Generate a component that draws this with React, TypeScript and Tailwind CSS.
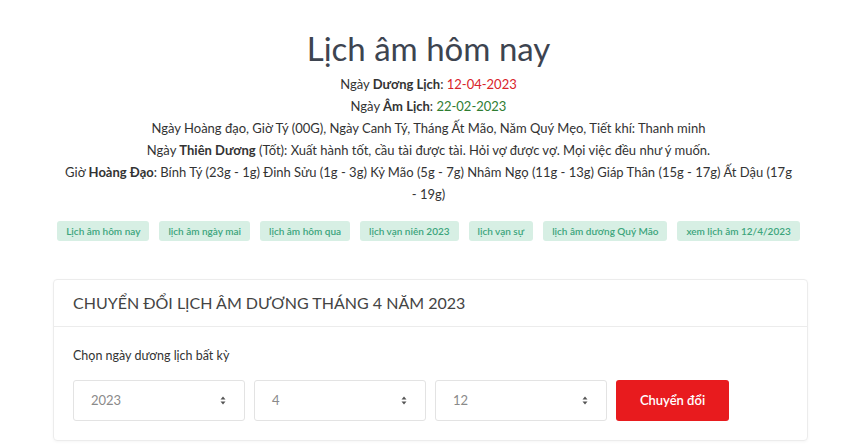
const FONT = { fontFamily: "Lato, 'Noto Sans', sans-serif" };

const TAGS = [
  "Lịch âm hôm nay",
  "lịch âm ngày mai",
  "lịch âm hôm qua",
  "lịch vạn niên 2023",
  "lịch vạn sự",
  "lịch âm dương Quý Mão",
  "xem lịch âm 12/4/2023",
];

function SelectBox({ value }: { value: string }) {
  return (
    <div className="w-[172px] h-[41px] border border-[#e3e3e3] rounded-[3px] flex items-center justify-between pl-[17px] pr-[18px] text-[13px] text-[#8a8a8a] bg-white">
      <span>{value}</span>
      <svg width="6" height="9" viewBox="0 0 6 9">
        <path d="M3 0.5 L5.5 3.5 H0.5 Z" fill="#555" />
        <path d="M3 8.5 L5.5 5.5 H0.5 Z" fill="#555" />
      </svg>
    </div>
  );
}

export default function App() {
  return (
    <div className="min-h-screen bg-white text-[#333]" style={FONT}>
      <div className="w-[755px] mx-auto pt-[26px]">
        <h1 className="text-center text-[33px] leading-[44px] text-[#3d4450]">Lịch âm hôm nay</h1>
        <div className="text-center text-[13px] leading-[22px] mt-[3px]">
          <p>
            Ngày <b>Dương Lịch</b>: <span className="text-[#d9232a]">12-04-2023</span>
          </p>
          <p>
            Ngày <b>Âm Lịch</b>: <span className="text-[#2f7d32]">22-02-2023</span>
          </p>
          <p>Ngày Hoàng đạo, Giờ Tý (00G), Ngày Canh Tý, Tháng Ất Mão, Năm Quý Mẹo, Tiết khí: Thanh minh</p>
          <p>
            Ngày <b>Thiên Dương</b> (Tốt): Xuất hành tốt, cầu tài được tài. Hỏi vợ được vợ. Mọi việc đều như ý muốn.
          </p>
          <p>
            Giờ <b>Hoàng Đạo</b>: Bính Tý (23g - 1g) Đinh Sửu (1g - 3g) Kỷ Mão (5g - 7g) Nhâm Ngọ (11g - 13g) Giáp Thân (15g - 17g) Ất Dậu (17g{" "}
            <span className="whitespace-nowrap">- 19g)</span>
          </p>
        </div>
      </div>
      <div className="flex justify-center gap-[10px] mt-[16px]">
        {TAGS.map((t) => (
          <span
            key={t}
            className="h-[20px] px-[9px] flex items-center rounded-[3px] bg-[#d7efe4] text-[#3ca57c] text-[10px] font-semibold"
          >
            {t}
          </span>
        ))}
      </div>
      <div className="ml-[53px] w-[755px] mt-[38px] border border-[#ececec] rounded-[4px] shadow-[0_1px_3px_rgba(0,0,0,0.04)]">
        <div className="h-[47px] flex items-center px-[19px] border-b border-[#ececec] text-[16px] text-[#444]">
          CHUYỂN ĐỔI LỊCH ÂM DƯƠNG THÁNG 4 NĂM 2023
        </div>
        <div className="px-[19px] pt-[19px] pb-[19px]">
          <p className="text-[12.5px] text-[#333] leading-[20px]">Chọn ngày dương lịch bất kỳ</p>
          <div className="flex gap-[9px] mt-[14px]">
            <SelectBox value="2023" />
            <SelectBox value="4" />
            <SelectBox value="12" />
            <button className="w-[113px] h-[41px] rounded-[3px] bg-[#e81b1e] text-white text-[13px] font-semibold shrink-0">
              Chuyển đổi
            </button>
          </div>
        </div>
      </div>
    </div>
  );
}
